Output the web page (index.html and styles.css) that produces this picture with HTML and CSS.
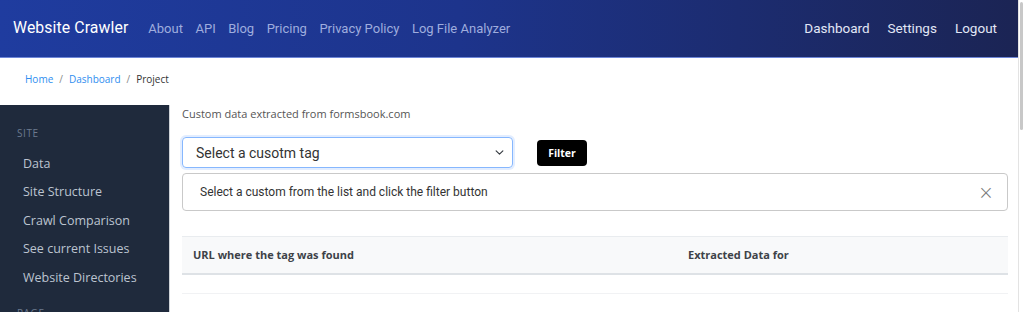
FILE: index.html
```html
<!DOCTYPE html>
<html lang="en">

<head>
  <meta charset="UTF-8" />
  <meta name="viewport" content="width=device-width, initial-scale=1.0" />
  <title>Project - Website Crawler</title>
  <link rel="stylesheet" href="styles.css">
</head>

<body>
  <div class="page">
    <nav class="navbar">
      <a class="brand" href="#">Website Crawler</a>
      <ul class="nav-left">
        <li><a href="#">About</a></li>
        <li><a href="#">API</a></li>
        <li><a href="#">Blog</a></li>
        <li><a href="#">Pricing</a></li>
        <li><a href="#">Privacy Policy</a></li>
        <li><a href="#">Log File Analyzer</a></li>
      </ul>
      <ul class="nav-right">
        <li><a href="#">Dashboard</a></li>
        <li><a href="#">Settings</a></li>
        <li><a href="#">Logout</a></li>
      </ul>
    </nav>

    <div class="breadcrumb">
      <a href="#">Home</a>
      <span class="sep">/</span>
      <a href="#">Dashboard</a>
      <span class="sep">/</span>
      <span class="current">Project</span>
    </div>

    <div class="layout">
      <aside class="sidebar">
        <p class="side-title">SITE</p>
        <ul class="side-menu">
          <li><a href="#">Data</a></li>
          <li><a href="#">Site Structure</a></li>
          <li><a href="#">Crawl Comparison</a></li>
          <li><a href="#">See current Issues</a></li>
          <li><a href="#">Website Directories</a></li>
        </ul>
        <p class="side-title">PAGE</p>
      </aside>

      <main class="content">
        <p class="intro">Custom data extracted from formsbook.com</p>
        <div class="filter-row">
          <div class="select-box">
            <span>Select a cusotm tag</span>
            <svg width="9" height="9" viewBox="0 0 16 16">
              <path d="M2 5l6 6 6-6" fill="none" stroke="#343a40" stroke-width="2" stroke-linecap="round" stroke-linejoin="round" />
            </svg>
          </div>
          <button class="btn-filter">Filter</button>
        </div>
        <div class="alert">
          <span>Select a custom from the list and click the filter button</span>
          <span class="close">&times;</span>
        </div>

        <table class="data-table">
          <thead>
            <tr>
              <th class="col-url">URL where the tag was found</th>
              <th>Extracted Data for</th>
            </tr>
          </thead>
          <tbody>
            <tr>
              <td></td>
              <td></td>
            </tr>
          </tbody>
        </table>
      </main>
    </div>
  </div>
  <div class="scroll-thumb"></div>
</body>

</html>
```

FILE: styles.css
```css
* {
  box-sizing: border-box;
}

body {
  margin: 0;
  background: #fff;
  font-family: Roboto, "Liberation Sans", sans-serif;
  overflow: hidden;
}

a {
  text-decoration: none;
}

ul {
  list-style: none;
  margin: 0;
  padding: 0;
}

.page {
  width: 1019px;
  border-right: 1px solid #e3e3e3;
  min-height: 312px;
}

/* top bar */
.navbar {
  height: 58px;
  display: flex;
  align-items: center;
  padding: 0 13px 3px;
  background: linear-gradient(90deg, #1f3c9f 0%, #1d348c 45%, #1b2454 100%);
  border-bottom: 1px solid #6d86d8;
}

.brand {
  color: #fff;
  font-size: 15.8px;
  letter-spacing: 0.1px;
  margin-right: 20px;
}

.nav-left {
  display: flex;
  gap: 12.5px;
}

.nav-left a {
  color: #9fadde;
  font-size: 13px;
}

.nav-right {
  display: flex;
  gap: 18px;
  margin-left: auto;
  margin-right: 8px;
}

.nav-right a {
  color: #e2e7f6;
  font-size: 13.5px;
}

/* breadcrumb */
.breadcrumb {
  height: 47px;
  display: flex;
  align-items: center;
  padding: 0 0 6px 25px;
  font-family: "Open Sans", sans-serif;
  font-size: 10px;
}

.breadcrumb a {
  color: #2f8ef0;
}

.breadcrumb .sep {
  color: #888;
  margin: 0 6px;
}

.breadcrumb .current {
  color: #333;
}

/* body */
.layout {
  display: flex;
  min-height: 207px;
}

.sidebar {
  width: 170px;
  background: #1f2a3c;
  padding: 21px 0 0 17px;
  font-family: "Open Sans", sans-serif;
  border-right: 1px solid #cfd3d8;
}

.side-title {
  margin: 0;
  color: #6c7a8f;
  font-size: 10px;
  letter-spacing: 0.6px;
}

.side-menu {
  padding: 9px 0 14px 6px;
}

.side-menu li {
  height: 28.5px;
  display: flex;
  align-items: center;
}

.side-menu a {
  color: #bcc4d0;
  font-size: 12.5px;
}

.content {
  flex: 1;
  padding: 0 10px 0 12px;
}

.intro {
  margin: 0 0 15px;
  padding-top: 1px;
  line-height: 16px;
  font-family: "Open Sans", sans-serif;
  font-size: 11px;
  color: #555;
}

.filter-row {
  display: flex;
  align-items: center;
  gap: 24px;
}

.select-box {
  width: 331px;
  height: 31px;
  display: flex;
  align-items: center;
  justify-content: space-between;
  padding: 0 8px 0 13px;
  border: 1px solid #86b7fe;
  border-radius: 4px;
  box-shadow: 0 0 0 2px rgba(13, 110, 253, 0.12);
  font-size: 14px;
  color: #333;
}

.btn-filter {
  width: 50px;
  height: 26px;
  border: none;
  border-radius: 4px;
  background: #000;
  color: #fff;
  font-family: "Open Sans", sans-serif;
  font-weight: 700;
  font-size: 10.5px;
  padding: 0;
}

.alert {
  margin-top: 5px;
  height: 38px;
  display: flex;
  align-items: center;
  justify-content: space-between;
  padding: 0 13px 0 17px;
  border: 1px solid #c9c9c9;
  border-radius: 4px;
  font-size: 12px;
  color: #333;
}

.alert .close {
  color: #777;
  font-size: 19px;
  font-family: "DejaVu Sans", sans-serif;
  font-weight: 300;
}

.data-table {
  width: 100%;
  margin-top: 25px;
  border-collapse: collapse;
  font-family: "Open Sans", sans-serif;
  font-size: 11px;
}

.data-table th {
  height: 37px;
  text-align: left;
  padding: 0 11px;
  background: #f8f9fa;
  color: #3d4248;
  font-weight: 700;
  border-top: 1px solid #e9ecef;
  border-bottom: 2px solid #dee2e6;
}

.data-table .col-url {
  width: 495px;
}

.data-table td {
  height: 20px;
  border-bottom: 1px solid #f1f2f4;
}

/* fake window scrollbar thumb */
.scroll-thumb {
  position: fixed;
  top: 2px;
  right: 1px;
  width: 3px;
  height: 128px;
  border-radius: 2px;
  background: #c8c8c8;
}
```
